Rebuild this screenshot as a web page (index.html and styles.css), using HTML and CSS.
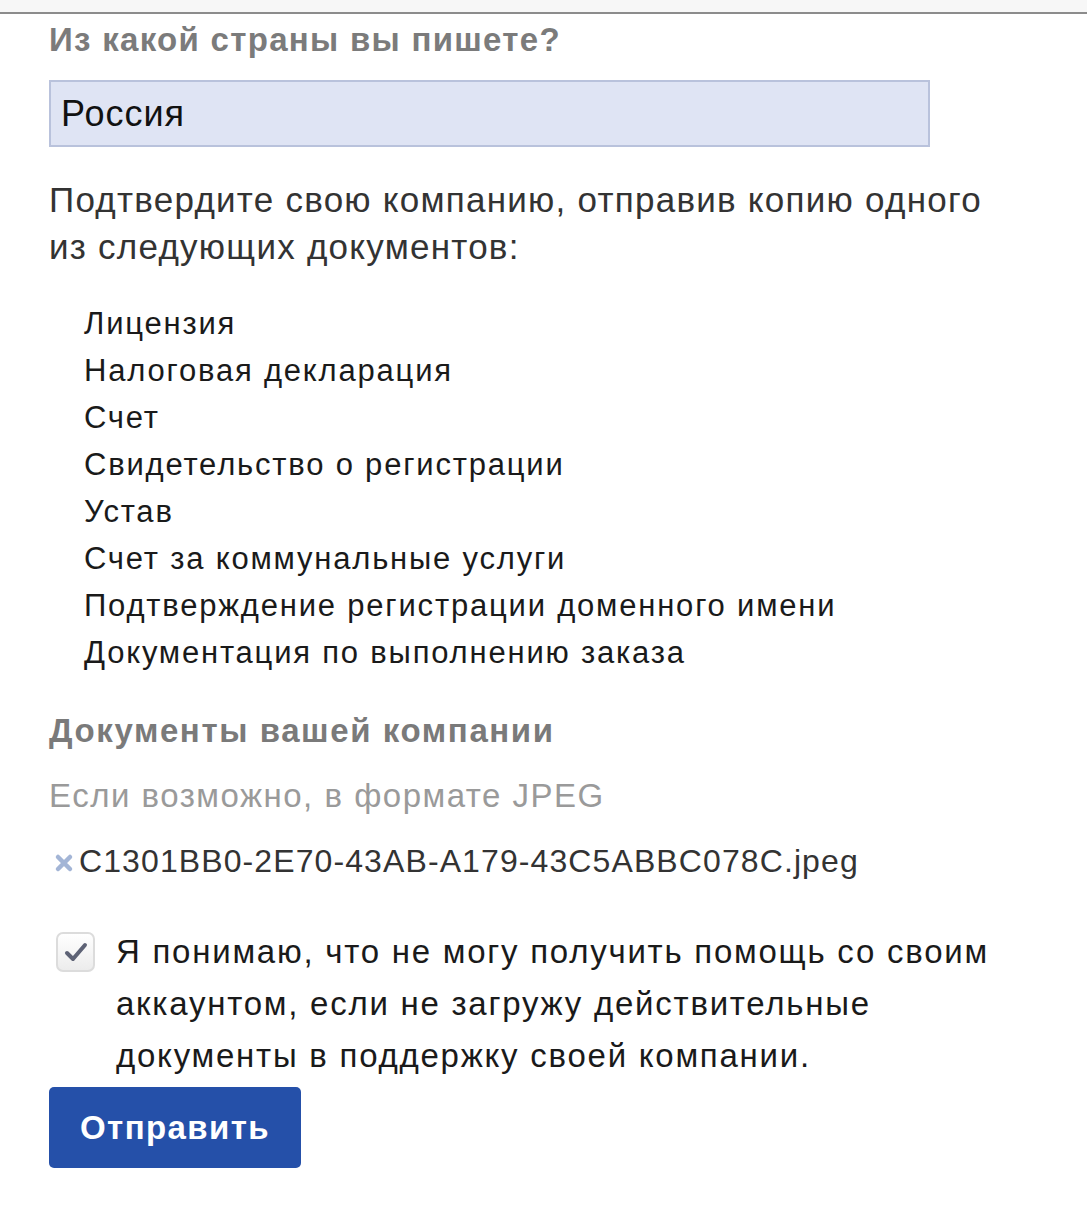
FILE: index.html
```html
<!DOCTYPE html>
<html lang="ru">
<head>
<meta charset="utf-8">
<title>Документы</title>
<link rel="stylesheet" href="styles.css">
</head>
<body>
<div class="topbar"></div>
<main class="form">
  <h2 class="q-title">Из какой страны вы пишете?</h2>
  <div class="country">Россия</div>
  <p class="intro">Подтвердите свою компанию, отправив копию одного из следующих документов:</p>
  <ul class="docs">
    <li>Лицензия</li>
    <li>Налоговая декларация</li>
    <li>Счет</li>
    <li>Свидетельство о регистрации</li>
    <li>Устав</li>
    <li>Счет за коммунальные услуги</li>
    <li>Подтверждение регистрации доменного имени</li>
    <li>Документация по выполнению заказа</li>
  </ul>
  <h3 class="sec-title">Документы вашей компании</h3>
  <div class="hint">Если возможно, в формате JPEG</div>
  <div class="file">
    <svg class="file-x" width="22" height="22" viewBox="0 0 22 22"><path d="M5 5 L17 17 M17 5 L5 17" stroke="#a3b5d6" stroke-width="4.5" stroke-linecap="round"/></svg>
    <span>C1301BB0-2E70-43AB-A179-43C5ABBC078C.jpeg</span>
  </div>
  <label class="agree">
    <span class="check"><svg width="26" height="22" viewBox="0 0 26 22"><path d="M4 12 L10 18 L22 4" fill="none" stroke="#5d6275" stroke-width="4" stroke-linecap="round" stroke-linejoin="round"/></svg></span>
    <span class="agree-text">Я понимаю, что не могу получить помощь со своим аккаунтом, если не загружу действительные документы в поддержку своей компании.</span>
  </label>
  <button class="submit">Отправить</button>
</main>
</body>
</html>
```
FILE: styles.css
```css
html, body {
  margin: 0;
  padding: 0;
  background: #ffffff;
}
body {
  font-family: "Liberation Sans", Arial, sans-serif;
  color: #1d1d1d;
}
.topbar {
  height: 12px;
  background: #f7f7f7;
  border-bottom: 2px solid #8c8c8c;
}
.form {
  padding: 0 0 0 49px;
}
.q-title {
  margin: 8px 0 0 0;
  font-weight: bold;
  font-size: 33px;
  letter-spacing: 1.3px;
  line-height: 36px;
  color: #7b7b7b;
}
.country {
  margin-top: 22px;
  width: 881px;
  height: 67px;
  box-sizing: border-box;
  background: #dfe4f4;
  border: 2px solid #b9c2dc;
  padding: 0 0 0 10px;
  font-size: 36px;
  letter-spacing: 1px;
  line-height: 63px;
  color: #111;
}
.intro {
  margin: 29px 0 0 0;
  width: 960px;
  font-size: 35px;
  letter-spacing: 1.25px;
  line-height: 47px;
  color: #333;
}
.docs {
  list-style: none;
  margin: 30px 0 0 0;
  padding: 0 0 0 35px;
  font-size: 31px;
  letter-spacing: 1.8px;
  line-height: 47px;
  color: #1a1a1a;
}
.sec-title {
  margin: 35px 0 0 0;
  font-size: 33px;
  letter-spacing: 1.6px;
  line-height: 40px;
  font-weight: bold;
  color: #7a7a7a;
}
.hint {
  margin-top: 25px;
  font-size: 33px;
  letter-spacing: 1.5px;
  line-height: 40px;
  color: #9a9a9a;
}
.file {
  margin-top: 25px;
  display: flex;
  align-items: center;
  gap: 4px;
  font-size: 32px;
  letter-spacing: 1.1px;
  line-height: 40px;
  color: #333;
}
.file-x {
  margin-left: 4px;
  margin-top: 4px;
}
.agree {
  margin-top: 45px;
  display: flex;
  align-items: flex-start;
  gap: 21px;
}
.check {
  flex: none;
  margin-left: 7px;
  margin-top: 6px;
  width: 39px;
  height: 40px;
  box-sizing: border-box;
  border: 2px solid #dcdcdc;
  border-radius: 7px;
  background: linear-gradient(#ffffff, #ececec);
  display: flex;
  align-items: center;
  justify-content: center;
}
.agree-text {
  width: 900px;
  font-size: 33px;
  letter-spacing: 1.75px;
  line-height: 52px;
  color: #1a1a1a;
}
.submit {
  display: block;
  margin-top: 5px;
  width: 252px;
  height: 81px;
  border: none;
  border-radius: 5px;
  background: #2550a9;
  color: #ffffff;
  font-family: "Liberation Sans", Arial, sans-serif;
  font-weight: bold;
  font-size: 33px;
  letter-spacing: 1.4px;
  cursor: pointer;
}
```
